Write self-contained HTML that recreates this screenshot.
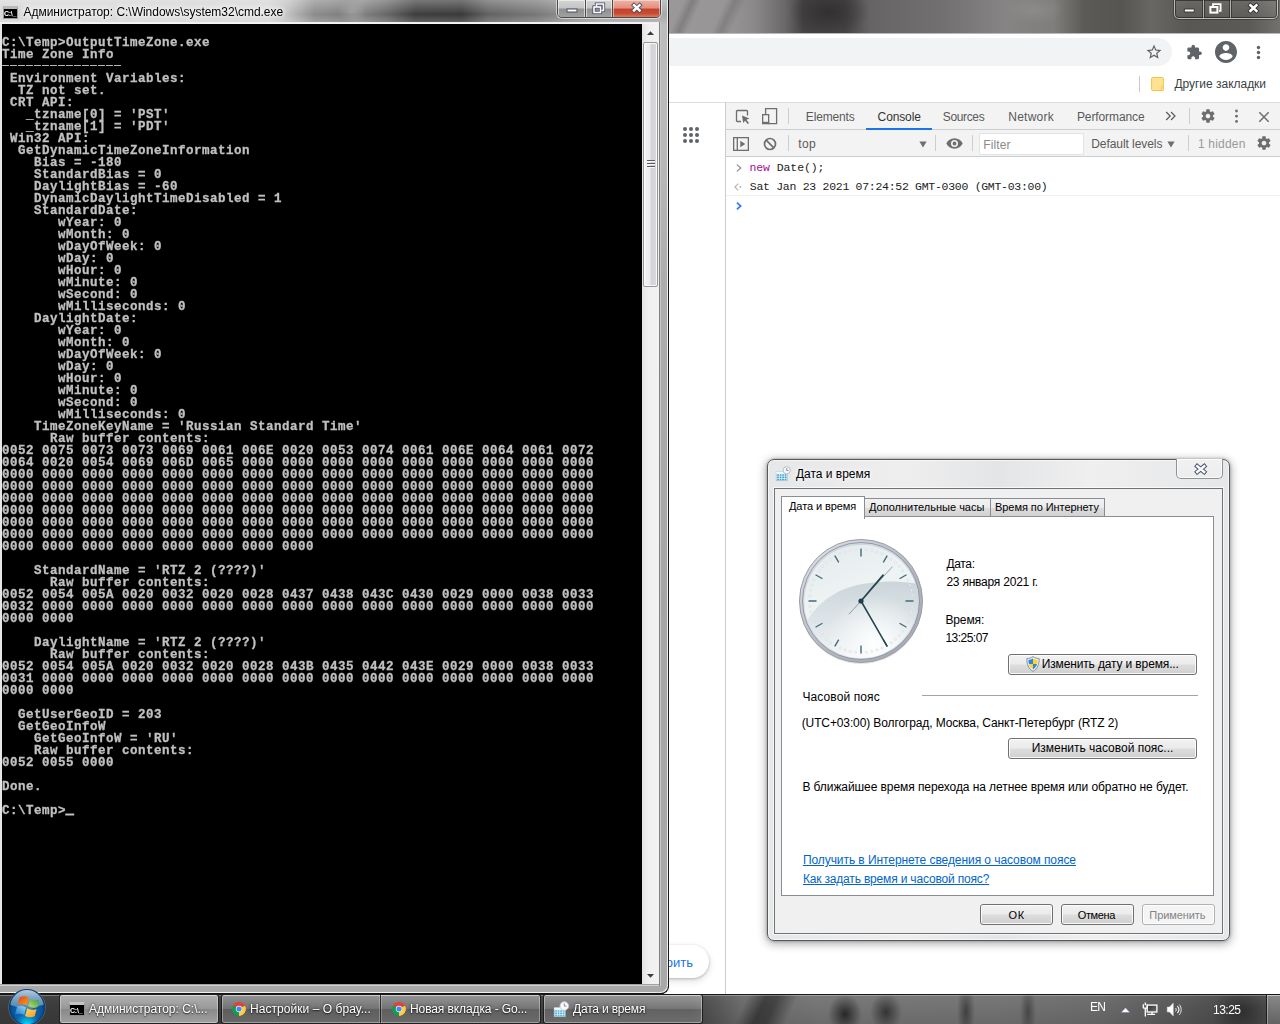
<!DOCTYPE html>
<html lang="ru">
<head>
<meta charset="utf-8">
<title>Desktop</title>
<style>
*{box-sizing:border-box;margin:0;padding:0}
html,body{width:1280px;height:1024px;overflow:hidden;background:#fff}
body{position:relative;font-family:"Liberation Sans",sans-serif;font-size:12px;color:#000}
.abs{position:absolute}
.t{position:absolute;white-space:nowrap;line-height:1}

/* ---------- Chrome window ---------- */
#chrome{position:absolute;left:669px;top:0;width:611px;height:994px;background:#fff;overflow:hidden}
#cglass{position:absolute;left:0;top:0;width:611px;height:33px;
 background:
  radial-gradient(ellipse 40px 26px at 160px 12px,rgba(35,33,33,.6),rgba(35,33,33,0) 100%),
  radial-gradient(ellipse 30px 14px at 365px 10px,rgba(160,158,156,.35),rgba(160,158,156,0) 100%),
  linear-gradient(115deg,rgba(0,0,0,0) 0,rgba(0,0,0,0) 14px,rgba(0,0,0,.16) 22px,rgba(0,0,0,0) 30px,rgba(0,0,0,0) 52px,rgba(0,0,0,.14) 60px,rgba(0,0,0,0) 70px),
  linear-gradient(90deg,#9a9898 0,#979595 10%,#8a8888 14%,#6a6868 19%,#454343 22%,#484646 29%,#666464 33%,#727070 45%,#868484 55%,#807e7c 63%,#5c5a56 68%,#575551 74%,#696763 79%,#595753 85%,#5c5a56 95%,#73716d 100%);}
#omni{position:absolute;left:-40px;top:38px;width:543px;height:28px;border-radius:14px;background:#f1f3f4}

/* ---------- DevTools ---------- */
#dt{position:absolute;left:56px;top:102px;width:555px;height:892px;background:#fff;border-left:1px solid #cbcdd1}
#dttabs{position:absolute;left:0;top:0;width:554px;height:28px;background:#f3f3f3;border-top:1px solid #dadce0;border-bottom:1px solid #cacdd1}
#dtbar{position:absolute;left:0;top:28px;width:554px;height:27px;background:#f3f3f3;border-bottom:1px solid #cacdd1}
.dtt{color:#5a5a5a;font-size:12px}
.mono{font-family:"Liberation Mono",monospace}

/* ---------- cmd window ---------- */
#cmd{position:absolute;left:0;top:0;width:669px;height:994px;border-radius:0 0 7px 0;
 background:linear-gradient(180deg,#bdbdbd 0,#b9b9b9 15%,#adadad 28%,#a6a6a6 60%,#a9a9a9 100%);overflow:hidden}
#cmdtitle{position:absolute;left:0;top:0;width:669px;height:24px;
 background:
  linear-gradient(180deg,rgba(255,255,255,.30) 0,rgba(255,255,255,.10) 40%,rgba(255,255,255,0) 60%,rgba(255,255,255,.22) 100%),
  radial-gradient(ellipse 14px 12px at 352px 12px,rgba(175,175,175,.55),rgba(175,175,175,0) 100%),
  linear-gradient(90deg,#d6d6d6 0,#d4d4d4 40%,#c0c0c0 43%,#8c8c8c 47%,#7c7c7c 52%,#828282 54%,#666 58%,#3e3e3e 62%,#3a3a3a 69%,#626262 73%,#777 80%,#8c8c8c 84%,#a4a4a4 90%,#a8a8a8 100%);}
#cmdclient{position:absolute;left:2px;top:24px;width:640px;height:960px;background:#000;overflow:hidden}
#cmdtext{will-change:transform;-webkit-text-stroke:.3px #c0c0c0;position:absolute;left:-.500px;top:.800px;font-family:"Liberation Mono",monospace;font-weight:bold;font-size:12.500px;letter-spacing:.499px;line-height:12px;color:#c0c0c0;white-space:pre}
#cmdsb{position:absolute;left:642px;top:24px;width:17px;height:960px;background:linear-gradient(90deg,#e4e4e4 0,#f0f0f0 40%,#f2f2f2 100%)}

/* ---------- Dialog ---------- */
#dlg{position:absolute;left:767px;top:459px;width:463px;height:482px;border-radius:7px;
 background:linear-gradient(90deg,#e6e7e8 0,#eeeeef 30%,#e4e5e6 50%,#efeff0 70%,#e6e7e8 100%);
 border:1px solid #55585c;box-shadow:0 0 0 1px rgba(255,255,255,.6) inset,0 2px 10px 1px rgba(0,0,0,.32),0 0 3px rgba(0,0,0,.32)}
#dlgclient{position:absolute;left:6px;top:28px;width:449px;height:446px;background:#f0f0f0;border:1px solid #6e7378;box-shadow:0 0 0 1px rgba(255,255,255,.7)}
#tabpage{position:absolute;left:6px;top:27px;width:433px;height:380px;background:#fff;border:1px solid #898c95}
.lnk{color:#0066cc;text-decoration:underline;text-underline-offset:1px}
.wbtn{position:absolute;height:21px;border:1px solid #707070;border-radius:3px;
 background:linear-gradient(180deg,#f2f2f2 0,#ebebeb 48%,#dddddd 52%,#cfcfcf 100%);box-shadow:inset 0 0 0 1px rgba(255,255,255,.85)}

/* ---------- Taskbar ---------- */
#tb{position:absolute;left:0;top:994px;width:1280px;height:30px;
 background:
  linear-gradient(180deg,rgba(255,255,255,.32) 0,rgba(255,255,255,.32) 1px,rgba(255,255,255,.04) 1px,rgba(255,255,255,0) 40%,rgba(0,0,0,.08) 100%),
  radial-gradient(ellipse 30px 26px at 1242px 16px,rgba(20,20,20,.5),rgba(20,20,20,0) 100%),
  linear-gradient(115deg,rgba(0,0,0,0) 678px,rgba(20,20,20,.55) 695px,rgba(20,20,20,.5) 706px,rgba(0,0,0,0) 724px),
  radial-gradient(ellipse 17px 20px at 845px 19px,rgba(15,15,15,.75),rgba(15,15,15,0) 100%),
  radial-gradient(ellipse 16px 20px at 886px 17px,rgba(20,20,20,.65),rgba(20,20,20,0) 100%),
  radial-gradient(ellipse 9px 30px at 966px 16px,rgba(25,25,25,.55),rgba(25,25,25,0) 100%),
  radial-gradient(ellipse 8px 30px at 1028px 16px,rgba(25,25,25,.45),rgba(25,25,25,0) 100%),
  linear-gradient(90deg,#3b3b3b 0,#404040 30%,#444 54%,#565656 56%,#6a6a6a 58%,#747474 64%,#727272 78%,#6a6a6a 86%,#585858 92%,#4a4a4a 96%,#505050 100%);
 border-top:1px solid #181818}
.tbb{position:absolute;top:-1px;height:30px;border:1px solid rgba(20,20,20,.9);border-radius:3px;
 box-shadow:inset 0 0 0 1px rgba(255,255,255,.35);
 background:linear-gradient(180deg,rgba(255,255,255,.42) 0,rgba(255,255,255,.28) 48%,rgba(255,255,255,.17) 52%,rgba(255,255,255,.24) 100%)}
.tbt{will-change:transform;position:absolute;white-space:nowrap;line-height:1;color:#fff;font-size:12px;text-shadow:0 0 3px rgba(0,0,0,.8),0 1px 1px rgba(0,0,0,.5)}
</style>
<style id="fit">
#cmdttl{letter-spacing:-0.024px;margin-left:0.5px}
#bk1{letter-spacing:-0.021px;margin-left:0.4px}
#dt1{letter-spacing:-0.171px;margin-left:-1.2px}
#dt2{letter-spacing:-0.133px;margin-left:-0.4px}
#dt3{letter-spacing:-0.367px;margin-left:-1.2px}
#dt4{letter-spacing:0.233px;margin-left:-0.7px}
#dt5{letter-spacing:-0.100px;margin-left:-1.1px}
#dt6{letter-spacing:0.300px;margin-left:0.3px}
#dt7{letter-spacing:0.080px;margin-left:-0.7px}
#dt8{letter-spacing:-0.062px;margin-left:-0.8px}
#dt9{letter-spacing:0.200px;margin-left:-1.1px}
#con1{letter-spacing:-0.080px;margin-left:-0.6px}
#con2{letter-spacing:-0.289px;margin-left:-0.2px}
#dttl{letter-spacing:-0.018px;margin-left:0.0px}
#tab1{letter-spacing:-0.091px;margin-left:0.0px}
#tab2{letter-spacing:0.000px;margin-left:0.0px}
#tab3{letter-spacing:-0.059px;margin-left:-1.0px}
#d1{letter-spacing:-0.325px;margin-left:0.4px}
#d2{letter-spacing:-0.225px;margin-left:0.4px}
#d3{letter-spacing:-0.120px;margin-left:-0.6px}
#d4{letter-spacing:-0.514px;margin-left:-0.6px}
#d5{letter-spacing:-0.139px;margin-left:-1.3px}
#d6{letter-spacing:0.109px;margin-left:-0.6px}
#d7{letter-spacing:-0.117px;margin-left:-1.3px}
#d8{letter-spacing:-0.009px;margin-left:-1.3px}
#d9{letter-spacing:-0.079px;margin-left:-0.6px}
#d10{letter-spacing:-0.068px;margin-left:-0.1px}
#d11{letter-spacing:-0.174px;margin-left:-0.1px}
#b1{letter-spacing:0.600px;margin-left:1.6px}
#b2{letter-spacing:-0.360px;margin-left:0.7px}
#b3{letter-spacing:-0.075px;margin-left:-0.7px}
#tb1{letter-spacing:-0.005px;margin-left:0.2px}
#tb2{letter-spacing:0.050px;margin-left:-1.0px}
#tb3{letter-spacing:-0.100px;margin-left:-1.0px}
#tb4{letter-spacing:-0.182px;margin-left:0.0px}
#tr1{letter-spacing:-0.800px;margin-left:-0.4px}
#tr2{letter-spacing:-0.500px;margin-left:-0.5px}
</style>
</head>
<body>

<!-- ================= CHROME ================= -->
<div id="chrome">
  <div id="cglass"></div>
  <div class="abs" style="left:0;top:33px;width:611px;height:1px;background:#b9b8b8"></div>
  <!-- caption buttons (inactive aero) -->
  <div class="abs" id="ccap" style="left:505px;top:-1px;width:104px;height:20px;border:1px solid rgba(255,255,255,.55);border-radius:0 0 5px 5px;box-shadow:inset 0 0 0 1px rgba(20,20,20,.55),0 0 0 1px rgba(20,20,20,.35);background:linear-gradient(180deg,rgba(255,255,255,.10),rgba(255,255,255,.02))">
    <div class="abs" style="left:28px;top:0;width:1px;height:18px;background:rgba(255,255,255,.5);box-shadow:1px 0 0 rgba(20,20,20,.5),-1px 0 0 rgba(20,20,20,.5)"></div>
    <div class="abs" style="left:55px;top:0;width:1px;height:18px;background:rgba(255,255,255,.5);box-shadow:1px 0 0 rgba(20,20,20,.5),-1px 0 0 rgba(20,20,20,.5)"></div>
    <svg class="abs" style="left:0;top:0" width="104" height="19" viewBox="0 0 104 19">
      <rect x="9.300" y="9" width="10" height="3" fill="#fff" stroke="#3a3a3a" stroke-width="1"/>
      <g fill="none" stroke="#fff" stroke-width="1.800"><path d="M38 6V4.200h7.600v6.600H44"/><rect x="35.400" y="7" width="7" height="5.600" stroke-width="2"/></g>
      <path d="M75.400 5.300l6 5.600M81.400 5.300l-6 5.600" stroke="#2c2c2c" stroke-width="4.200" stroke-linecap="square"/>
      <path d="M75.400 5.300l6 5.600M81.400 5.300l-6 5.600" stroke="#fff" stroke-width="2.600" stroke-linecap="square"/>
    </svg>
  </div>
  <!-- toolbar -->
  <div id="omni"></div>
  <svg class="abs" style="left:476px;top:43px" width="18" height="18" viewBox="0 0 24 24"><path fill="#5f6368" d="M22 9.240l-7.190-.620L12 2 9.190 8.630 2 9.240l5.460 4.730L5.820 21 12 17.270 18.180 21l-1.630-7.030L22 9.240zM12 15.400l-3.760 2.270 1-4.280-3.320-2.880 4.380-.38L12 6.100l1.710 4.040 4.380.38-3.320 2.880 1 4.280L12 15.400z"/></svg>
  <svg class="abs" style="left:516.500px;top:43.500px" width="16.500" height="16.500" viewBox="0 0 24 24"><path fill="#5f6368" d="M20.500 11H19V7c0-1.100-.9-2-2-2h-4V3.500C13 2.120 11.880 1 10.500 1S8 2.120 8 3.500V5H4c-1.100 0-1.990.9-1.990 2v3.800H3.500c1.490 0 2.700 1.210 2.700 2.700s-1.210 2.700-2.700 2.700H2V20c0 1.100.9 2 2 2h3.800v-1.500c0-1.490 1.210-2.700 2.700-2.700 1.490 0 2.700 1.210 2.700 2.700V22H17c1.100 0 2-.9 2-2v-4h1.500c1.380 0 2.500-1.120 2.500-2.500S21.880 11 20.500 11z"/></svg>
  <svg class="abs" style="left:546px;top:41px" width="22" height="22" viewBox="2 2 20 20"><path fill="#5f6368" d="M12 2C6.480 2 2 6.480 2 12s4.480 10 10 10 10-4.480 10-10S17.520 2 12 2zm0 3c1.660 0 3 1.340 3 3s-1.340 3-3 3-3-1.340-3-3 1.340-3 3-3zm0 14.200c-2.500 0-4.710-1.280-6-3.220.03-1.990 4-3.080 6-3.080 1.990 0 5.970 1.090 6 3.080-1.290 1.940-3.500 3.220-6 3.220z"/></svg>
  <svg class="abs" style="left:586px;top:44px" width="7" height="17" viewBox="0 0 7 17"><g fill="#5f6368"><circle cx="3.5" cy="3.500" r="1.700"/><circle cx="3.5" cy="8.500" r="1.700"/><circle cx="3.500" cy="13.500" r="1.700"/></g></svg>
  <!-- bookmarks bar -->
  <div class="abs" style="left:470px;top:76px;width:1px;height:16px;background:#c8cacd"></div>
  <svg class="abs" style="left:482px;top:76px" width="14" height="16" viewBox="0 0 14 16"><path d="M1.600 1.500h9.800a1 1 0 0 1 1 1v11a1 1 0 0 1-1 1H1.600a1 1 0 0 1-1-1v-11a1 1 0 0 1 1-1z" fill="#fde293" stroke="#f9c440" stroke-width="1"/><rect x="10.400" y="10.200" width="2" height="4.200" rx=".8" fill="#fde293" stroke="#f9c440" stroke-width=".8"/></svg>
  <div class="t" id="bk1" style="left:505px;top:78px;font-size:12px;color:#3c4043">Другие закладки</div>
  <div class="abs" style="left:0;top:102px;width:611px;height:1px;background:#dadce0"></div>
  <!-- new tab page remnants -->
  <svg class="abs" style="left:14px;top:127px" width="16" height="16" viewBox="0 0 16 16"><g fill="#5f6368"><circle cx="2" cy="2" r="2"/><circle cx="8" cy="2" r="2"/><circle cx="14" cy="2" r="2"/><circle cx="2" cy="8" r="2"/><circle cx="8" cy="8" r="2"/><circle cx="14" cy="8" r="2"/><circle cx="2" cy="14" r="2"/><circle cx="8" cy="14" r="2"/><circle cx="14" cy="14" r="2"/></g></svg>
  <div class="abs" style="left:-70px;top:945px;width:110px;height:33px;border-radius:17px;background:#fff;box-shadow:0 1px 3px rgba(0,0,0,.22),0 3px 7px 1px rgba(0,0,0,.10)"></div>
  <div class="t" id="custom" style="left:-42px;top:956px;width:66px;text-align:right;font-size:13px;color:#1a73e8">Настроить</div>
  <div id="dt">
    <div id="dttabs"></div>
    <div id="dtbar"></div>
    <!-- tab strip icons -->
    <svg class="abs" style="left:9px;top:7px" width="16" height="16" viewBox="0 0 16 16"><path d="M12.500 6.500V2.300a.8.800 0 0 0-.8-.8H2.300a.8.800 0 0 0-.8.800v9.400a.8.800 0 0 0 .8.800H6" fill="none" stroke="#6e6e6e" stroke-width="1.300"/><path d="M7 6.500l7.500 3.100-3.100 1.100 2.600 3.200-1.400 1.100-2.500-3.300-1.900 2.400z" fill="#6e6e6e"/></svg>
    <svg class="abs" style="left:35px;top:5px" width="17" height="18" viewBox="0 0 17 18"><path d="M4.600 7.500V1.600h11v15H7.500" fill="none" stroke="#6e6e6e" stroke-width="1.300"/><rect x="1.650" y="7.650" width="6" height="9" fill="#f3f3f3" stroke="#6e6e6e" stroke-width="1.300"/><rect x="1" y="14.800" width="7.300" height="1.800" fill="#6e6e6e"/></svg>
    <div class="abs" style="left:62px;top:6px;width:1px;height:16px;background:#cdcdcd"></div>
    <div class="t dtt" id="dt1" style="left:81px;top:9px">Elements</div>
    <div class="t dtt" id="dt2" style="left:152px;top:9px;color:#333">Console</div>
    <div class="abs" style="left:140px;top:26px;width:66px;height:2px;background:#1a73e8"></div>
    <div class="t dtt" id="dt3" style="left:218px;top:9px">Sources</div>
    <div class="t dtt" id="dt4" style="left:283px;top:9px">Network</div>
    <div class="t dtt" id="dt5" style="left:352px;top:9px">Performance</div>
    <svg class="abs" style="left:439px;top:9px" width="11" height="10" viewBox="0 0 11 10"><path d="M1.200 1l4 4-4 4M6 1l4 4-4 4" fill="none" stroke="#5a5a5a" stroke-width="1.200"/></svg>
    <div class="abs" style="left:463px;top:6px;width:1px;height:16px;background:#cdcdcd"></div>
    <svg class="abs gear" style="left:474px;top:6px" width="16" height="16" viewBox="0 0 24 24"><path fill="#6e6e6e" d="M19.430 12.980c.040-.320.070-.640.070-.980s-.030-.660-.070-.980l2.110-1.650c.190-.150.240-.420.120-.640l-2-3.460c-.120-.220-.390-.300-.610-.220l-2.490 1c-.520-.400-1.080-.730-1.690-.980l-.380-2.650C14.460 2.180 14.250 2 14 2h-4c-.250 0-.460.180-.490.420l-.380 2.650c-.610.250-1.170.590-1.690.980l-2.490-1c-.230-.090-.490 0-.610.220l-2 3.460c-.130.220-.070.490.120.640l2.110 1.650c-.040.320-.070.650-.070.980s.030.660.070.980l-2.110 1.650c-.190.150-.240.420-.120.640l2 3.460c.120.220.390.300.610.220l2.490-1c.520.400 1.080.730 1.690.980l.380 2.650c.030.240.240.420.490.420h4c.250 0 .460-.180.490-.420l.380-2.650c.610-.250 1.170-.590 1.690-.980l2.490 1c.230.090.490 0 .610-.220l2-3.460c.120-.220.070-.490-.120-.640l-2.110-1.650zM12 15.500c-1.930 0-3.500-1.570-3.500-3.500s1.570-3.500 3.500-3.500 3.500 1.570 3.500 3.500-1.570 3.500-3.500 3.500z"/></svg>
    <svg class="abs" style="left:508px;top:7px" width="5" height="15" viewBox="0 0 5 15"><g fill="#6e6e6e"><circle cx="2.500" cy="2" r="1.400"/><circle cx="2.500" cy="7.200" r="1.400"/><circle cx="2.500" cy="12.400" r="1.400"/></g></svg>
    <svg class="abs" style="left:532px;top:9px" width="12" height="12" viewBox="0 0 12 12"><path d="M1.300 1.300l9.400 9.400M10.700 1.300l-9.400 9.400" stroke="#6e6e6e" stroke-width="1.500"/></svg>
    <!-- console toolbar -->
    <svg class="abs" style="left:7px;top:35px" width="16" height="14" viewBox="0 0 16 14"><rect x=".650" y=".650" width="14.700" height="12.700" fill="none" stroke="#6e6e6e" stroke-width="1.300"/><path d="M4.300 1v12" stroke="#6e6e6e" stroke-width="1.300"/><path d="M7.300 3.800l5 3.200-5 3.200z" fill="#6e6e6e"/></svg>
    <svg class="abs" style="left:37px;top:35px" width="14" height="14" viewBox="0 0 14 14"><circle cx="7" cy="7" r="5.500" fill="none" stroke="#6e6e6e" stroke-width="1.700"/><path d="M3.200 3.200l7.600 7.600" stroke="#6e6e6e" stroke-width="1.700"/></svg>
    <div class="abs" style="left:62px;top:33px;width:1px;height:16px;background:#cdcdcd"></div>
    <div class="t dtt" id="dt6" style="left:72px;top:36px">top</div>
    <svg class="abs" style="left:193px;top:39px" width="8" height="7" viewBox="0 0 8 7"><path d="M.4.500h7.200L4 6.500z" fill="#6e6e6e"/></svg>
    <div class="abs" style="left:209px;top:33px;width:1px;height:16px;background:#cdcdcd"></div>
    <svg class="abs" style="left:220px;top:36px" width="17" height="11" viewBox="0 0 17 11"><path d="M8.500.300C4.800.300 1.700 2.400.300 5.500c1.400 3.100 4.500 5.200 8.200 5.200s6.800-2.100 8.200-5.200C15.300 2.400 12.200.300 8.500.300zm0 8.700a3.500 3.500 0 1 1 0-7 3.500 3.500 0 0 1 0 7zm0-5.400a1.900 1.900 0 1 0 0 3.800 1.900 1.900 0 0 0 0-3.800z" fill="#6e6e6e"/></svg>
    <div class="abs" style="left:246px;top:33px;width:1px;height:16px;background:#cdcdcd"></div>
    <div class="abs" style="left:253px;top:31px;width:105px;height:22px;background:#fff;border:1px solid #e3e3e3"></div>
    <div class="t" id="dt7" style="left:258px;top:37px;font-size:12px;color:#8a8a8a">Filter</div>
    <div class="t dtt" id="dt8" style="left:366px;top:36px">Default levels</div>
    <svg class="abs" style="left:441px;top:39px" width="8" height="7" viewBox="0 0 8 7"><path d="M.4.500h7.200L4 6.500z" fill="#6e6e6e"/></svg>
    <div class="abs" style="left:462px;top:33px;width:1px;height:16px;background:#cdcdcd"></div>
    <div class="t" id="dt9" style="left:473px;top:36px;font-size:12px;color:#9a9a9a">1 hidden</div>
    <svg class="abs gear" style="left:530px;top:33px" width="16" height="16" viewBox="0 0 24 24"><path fill="#6e6e6e" d="M19.430 12.980c.040-.320.070-.640.070-.980s-.030-.660-.070-.980l2.110-1.650c.190-.150.240-.420.120-.640l-2-3.460c-.120-.220-.390-.300-.610-.220l-2.490 1c-.520-.400-1.080-.730-1.690-.980l-.380-2.650C14.460 2.180 14.250 2 14 2h-4c-.250 0-.460.180-.490.420l-.380 2.650c-.610.250-1.170.590-1.690.980l-2.490-1c-.230-.090-.490 0-.610.220l-2 3.460c-.130.220-.070.490.120.640l2.110 1.650c-.040.320-.070.650-.070.980s.030.660.070.980l-2.110 1.650c-.190.150-.240.420-.120.640l2 3.460c.120.220.390.300.610.220l2.490-1c.520.400 1.080.730 1.690.980l.380 2.650c.030.240.240.420.490.420h4c.250 0 .460-.180.490-.420l.380-2.650c.610-.250 1.170-.590 1.690-.980l2.490 1c.230.090.490 0 .610-.220l2-3.460c.120-.220.070-.490-.120-.640l-2.110-1.650zM12 15.500c-1.930 0-3.500-1.570-3.500-3.500s1.570-3.500 3.500-3.500 3.500 1.570 3.500 3.500-1.570 3.500-3.500 3.500z"/></svg>
    <!-- console rows -->
    <svg class="abs" style="left:9.500px;top:61.500px" width="6" height="8" viewBox="0 0 6 8"><path d="M.8.600l4 3.400-4 3.400" fill="none" stroke="#8b8b8b" stroke-width="1.200"/></svg>
    <div class="t mono" id="con1" style="left:24px;top:60px;font-size:11.500px;color:#222"><span style="color:#aa0d91">new</span> Date();</div>
    <svg class="abs" style="left:8px;top:80.500px" width="9" height="8" viewBox="0 0 9 8"><path d="M4.300.600L.9 4l3.400 3.400" fill="none" stroke="#b5b5b5" stroke-width="1.200"/><circle cx="6.300" cy="4" r="1" fill="#b5b5b5"/></svg>
    <div class="t mono" id="con2" style="left:24px;top:79.200px;font-size:11.500px;color:#222">Sat Jan 23 2021 07:24:52 GMT-0300 (GMT-03:00)</div>
    <div class="abs" style="left:0;top:93px;width:554px;height:1px;background:#f0f0f0"></div>
    <svg class="abs" style="left:9.500px;top:100px" width="6" height="8" viewBox="0 0 6 8"><path d="M.9.700l3.800 3.300-3.800 3.300" fill="none" stroke="#367cf1" stroke-width="1.700"/></svg>
  </div>
</div>

<!-- ================= CMD ================= -->
<div id="cmd">
  <div id="cmdtitle"></div>
  <!-- frame lines -->
  <div class="abs" style="left:0;top:22px;width:661px;height:2px;background:linear-gradient(180deg,#ececec,#f8f8f8)"></div>
  <div class="abs" style="left:0;top:24px;width:2px;height:962px;background:#e6e6e6"></div>
  <div class="abs" style="left:0;top:984px;width:661px;height:2px;background:linear-gradient(180deg,#8c8c8c,#e6e6e6)"></div>
  <div class="abs" style="left:659px;top:22px;width:2px;height:964px;background:linear-gradient(90deg,#5f5f5f,#e9e9e9)"></div>
  <div class="abs" style="left:0;top:992px;width:662px;height:1px;background:#f1f1f1"></div>
  <div class="abs" style="left:0;top:993px;width:664px;height:1px;background:#161616"></div>
  <div class="abs" style="left:667px;top:0;width:1px;height:986px;background:#ededed"></div>
  <div class="abs" style="left:668px;top:0;width:1px;height:988px;background:#1a1a1a"></div>
  <div class="abs" style="left:655px;top:980px;width:14px;height:14px;border-radius:0 0 8px 0;border:solid #161616;border-width:0 1px 1px 0;box-shadow:inset -1px -1px 0 #e8e8e8"></div>
  <!-- title icon + text -->
  <div class="abs" style="left:3px;top:6px;width:15px;height:13px;background:#000;border:1px solid #9a9a9a;border-top:3px solid #b9b9b9"></div>
  <div class="t" id="cmdico" style="will-change:transform;left:4px;top:10px;font-size:7px;font-weight:bold;color:#fff;letter-spacing:-.3px">C:\_</div>
  <div class="t" id="cmdttl" style="left:23px;top:6px;font-size:12px;color:#000;text-shadow:0 0 5px #fff,0 0 5px #fff,0 0 8px #fff">Администратор: C:\Windows\system32\cmd.exe</div>
  <!-- caption buttons -->
  <div class="abs" style="left:557px;top:-1px;width:104px;height:19px;border:1px solid #4a4a4a;border-radius:0 0 5px 5px;overflow:hidden;box-shadow:0 0 0 1px rgba(255,255,255,.55)">
    <div class="abs" style="left:0;top:0;width:27px;height:18px;background:linear-gradient(180deg,#d4d4d4 0,#c4c4c4 45%,#8f8f8f 50%,#a4a4a4 100%);box-shadow:inset 0 0 0 1px rgba(255,255,255,.55)"></div>
    <div class="abs" style="left:27px;top:0;width:1px;height:18px;background:#4a4a4a"></div>
    <div class="abs" style="left:28px;top:0;width:26px;height:18px;background:linear-gradient(180deg,#d4d4d4 0,#c4c4c4 45%,#8f8f8f 50%,#a4a4a4 100%);box-shadow:inset 0 0 0 1px rgba(255,255,255,.55)"></div>
    <div class="abs" style="left:54px;top:0;width:1px;height:18px;background:#4a4a4a"></div>
    <div class="abs" style="left:55px;top:0;width:47px;height:18px;background:linear-gradient(180deg,#eeb3a5 0,#e08f7f 45%,#c8402a 50%,#c94b32 75%,#dd8a6c 100%);box-shadow:inset 0 0 0 1px rgba(255,255,255,.45)"></div>
    <svg class="abs" style="left:0;top:0" width="102" height="18" viewBox="0 0 102 18">
      <rect x="9" y="9" width="10" height="3" fill="#fff" stroke="#474c66" stroke-width="1"/>
      <g fill="none" stroke="#474c66" stroke-width="3.200"><path d="M38.500 6.500V4h7v6.500H43.500"/><rect x="36" y="7" width="6.500" height="5.500"/></g>
      <g fill="none" stroke="#fff" stroke-width="1.600"><path d="M38.500 6.500V4h7v6.500H43.500"/><rect x="36" y="7" width="6.500" height="5.500"/></g>
      <path d="M76 5.200l5.600 5.200M81.600 5.200l-5.600 5.200" stroke="#474c66" stroke-width="4.200" stroke-linecap="square"/>
      <path d="M76 5.200l5.600 5.200M81.600 5.200l-5.600 5.200" stroke="#fff" stroke-width="2.500" stroke-linecap="square"/>
    </svg>
  </div>
  <div id="cmdclient"><div id="cmdtext">
C:\Temp&gt;OutputTimeZone.exe
Time Zone Info
<span style="display:inline-block;letter-spacing:-2.930px;transform-origin:0 55%;transform:translate(-3px,-1.800px) scale(1.750,.62)">---------------</span>
 Environment Variables:
  TZ not set.
 CRT API:
   _tzname[0] = 'PST'
   _tzname[1] = 'PDT'
 Win32 API:
  GetDynamicTimeZoneInformation
    Bias = -180
    StandardBias = 0
    DaylightBias = -60
    DynamicDaylightTimeDisabled = 1
    StandardDate:
       wYear: 0
       wMonth: 0
       wDayOfWeek: 0
       wDay: 0
       wHour: 0
       wMinute: 0
       wSecond: 0
       wMilliseconds: 0
    DaylightDate:
       wYear: 0
       wMonth: 0
       wDayOfWeek: 0
       wDay: 0
       wHour: 0
       wMinute: 0
       wSecond: 0
       wMilliseconds: 0
    TimeZoneKeyName = 'Russian Standard Time'
      Raw buffer contents:
0052 0075 0073 0073 0069 0061 006E 0020 0053 0074 0061 006E 0064 0061 0072
0064 0020 0054 0069 006D 0065 0000 0000 0000 0000 0000 0000 0000 0000 0000
0000 0000 0000 0000 0000 0000 0000 0000 0000 0000 0000 0000 0000 0000 0000
0000 0000 0000 0000 0000 0000 0000 0000 0000 0000 0000 0000 0000 0000 0000
0000 0000 0000 0000 0000 0000 0000 0000 0000 0000 0000 0000 0000 0000 0000
0000 0000 0000 0000 0000 0000 0000 0000 0000 0000 0000 0000 0000 0000 0000
0000 0000 0000 0000 0000 0000 0000 0000 0000 0000 0000 0000 0000 0000 0000
0000 0000 0000 0000 0000 0000 0000 0000 0000 0000 0000 0000 0000 0000 0000
0000 0000 0000 0000 0000 0000 0000 0000

    StandardName = 'RTZ 2 (????)'
      Raw buffer contents:
0052 0054 005A 0020 0032 0020 0028 0437 0438 043C 0430 0029 0000 0038 0033
0032 0000 0000 0000 0000 0000 0000 0000 0000 0000 0000 0000 0000 0000 0000
0000 0000

    DaylightName = 'RTZ 2 (????)'
      Raw buffer contents:
0052 0054 005A 0020 0032 0020 0028 043B 0435 0442 043E 0029 0000 0038 0033
0031 0000 0000 0000 0000 0000 0000 0000 0000 0000 0000 0000 0000 0000 0000
0000 0000

  GetUserGeoID = 203
  GetGeoInfoW
    GetGeoInfoW = 'RU'
    Raw buffer contents:
0052 0055 0000

Done.

C:\Temp&gt;<span style="position:relative;top:-1px;-webkit-text-stroke:1.300px #c0c0c0">_</span></div></div>
  <div id="cmdsb">
    <svg class="abs" style="left:5px;top:7px" width="7" height="4" viewBox="0 0 7 4"><path d="M0 4L3.500 .3 7 4z" fill="#3c3c3c"/></svg>
    <div class="abs" style="left:1px;top:18px;width:15px;height:245px;border:1px solid #979797;border-radius:2px;background:linear-gradient(90deg,#f4f4f4 0,#ececec 45%,#d3d3d7 55%,#d9d9dd 100%);box-shadow:inset 0 0 0 1px rgba(255,255,255,.8)"></div>
    <div class="abs" style="left:5px;top:136px;width:8px;height:1px;background:#5a5a5a;box-shadow:0 1px 0 #f6f6f6,0 3px 0 #5a5a5a,0 4px 0 #f6f6f6,0 6px 0 #5a5a5a,0 7px 0 #f6f6f6"></div>
    <svg class="abs" style="left:5px;top:950px" width="7" height="4" viewBox="0 0 7 4"><path d="M0 0L3.500 3.700 7 0z" fill="#3c3c3c"/></svg>
  </div>
</div>

<!-- ================= DIALOG ================= -->
<div id="dlg">
  <!-- title -->
  <svg class="abs" style="left:7px;top:5px" width="17" height="17" viewBox="0 0 17 17"><rect x="1.200" y="6.700" width="11" height="9" fill="#e4f1f8" stroke="#a9bfcb" stroke-width=".7"/><rect x="1.200" y="6.700" width="11" height="2" fill="#f4f8fa"/><g fill="#3ba7d0"><rect x="2.2" y="9.3" width="1.700" height="1.500"/><rect x="4.7" y="9.3" width="1.700" height="1.500"/><rect x="7.2" y="9.3" width="1.700" height="1.500"/><rect x="9.7" y="9.3" width="1.700" height="1.500"/><rect x="2.2" y="11.5" width="1.700" height="1.500"/><rect x="4.7" y="11.5" width="1.700" height="1.500"/><rect x="7.2" y="11.5" width="1.700" height="1.500"/><rect x="9.7" y="11.5" width="1.700" height="1.500"/><rect x="2.2" y="13.7" width="1.700" height="1.500"/><rect x="4.7" y="13.7" width="1.700" height="1.500"/><rect x="7.2" y="13.7" width="1.700" height="1.500"/><rect x="9.7" y="13.7" width="1.700" height="1.500"/></g><circle cx="11.700" cy="5.300" r="3.600" fill="#f6f8fa" stroke="#aab1ba" stroke-width=".8"/><path d="M11.700 3.200v2.300h1.800" fill="none" stroke="#6f7680" stroke-width=".8"/></svg>
  <div class="t" id="dttl" style="left:28px;top:7.5px;font-size:12px;text-shadow:0 0 6px #fff,0 0 6px #fff">Дата и время</div>
  <div class="abs" style="left:408px;top:-1px;width:47px;height:20px;border:1px solid #8e9299;border-top:none;border-radius:0 0 5px 5px;background:linear-gradient(180deg,#f1f1f2 0,#ededee 100%);box-shadow:inset 0 0 0 1px rgba(255,255,255,.7)"></div>
  <svg class="abs" style="left:426px;top:3px" width="14" height="12" viewBox="0 0 14 12"><path d="M3.200 3.200l7 5.800M10.200 3.200l-7 5.800" stroke="#4b5170" stroke-width="4.400" stroke-linecap="square"/><path d="M3.200 3.200l7 5.800M10.200 3.200l-7 5.800" stroke="#fbfbfc" stroke-width="2.500" stroke-linecap="square"/></svg>
  <div id="dlgclient">
    <!-- tabs -->
    <div class="abs" style="left:89px;top:9px;width:127px;height:19px;border:1px solid #898c95;border-bottom:none;border-left:none;background:linear-gradient(180deg,#f2f2f2 0,#ebebeb 48%,#dddddd 52%,#cfcfcf 100%)"></div>
    <div class="abs" style="left:216px;top:9px;width:114px;height:19px;border:1px solid #898c95;border-bottom:none;border-left:none;background:linear-gradient(180deg,#f2f2f2 0,#ebebeb 48%,#dddddd 52%,#cfcfcf 100%)"></div>
    <div class="t tab" id="tab2" style="left:94px;top:13px;font-size:11px">Дополнительные часы</div>
    <div class="t tab" id="tab3" style="left:221px;top:13px;font-size:11px">Время по Интернету</div>
    <div id="tabpage">
      <svg class="abs" id="clock" style="left:14px;top:18.500px" width="130" height="130" viewBox="0 0 130 130">
  <defs>
    <linearGradient id="rim" x1="0" y1="0" x2="1" y2="1"><stop offset="0" stop-color="#e4e6ea"/><stop offset=".5" stop-color="#b9bcc3"/><stop offset="1" stop-color="#a2a5ad"/></linearGradient>
    <linearGradient id="face" x1="0" y1="0" x2="0" y2="1"><stop offset="0" stop-color="#cdd7db"/><stop offset=".35" stop-color="#ccd6da"/><stop offset=".7" stop-color="#dfe6e9"/><stop offset="1" stop-color="#f1f4f5"/></linearGradient>
    <linearGradient id="shine" x1="0" y1="0" x2=".6" y2="1"><stop offset="0" stop-color="#e4eaed"/><stop offset=".6" stop-color="#edf2f3"/><stop offset="1" stop-color="#f3f6f7"/></linearGradient>
    <radialGradient id="low" cx=".62" cy=".86" r=".42"><stop offset="0" stop-color="#ffffff" stop-opacity=".95"/><stop offset="1" stop-color="#ffffff" stop-opacity="0"/></radialGradient>
  </defs>
  <circle cx="65" cy="66.500" r="61.500" fill="#000" opacity=".10"/>
  <circle cx="65" cy="65" r="61.500" fill="url(#rim)" stroke="#9a9da5" stroke-width="1"/>
  <circle cx="65" cy="65" r="58.500" fill="#d4d9dd" stroke="#7f8aa0" stroke-width=".8"/>
  <circle cx="65" cy="65" r="57" fill="url(#face)"/>
  <circle cx="65" cy="65" r="57" fill="url(#low)"/>
  <path d="M11.300 84.500C24 64 44 51 70 47.500S108 46 119.200 47.500A57 57 0 0 0 11.300 84.500z" fill="url(#shine)"/>
  <g fill="#fff" stroke="#bfcacf" stroke-width=".45"><circle cx="70.38" cy="13.78" r="1"/><circle cx="75.71" cy="14.63" r="1"/><circle cx="80.91" cy="16.02" r="1"/><circle cx="85.95" cy="17.95" r="1"/><circle cx="95.27" cy="23.34" r="1"/><circle cx="99.46" cy="26.73" r="1"/><circle cx="103.27" cy="30.54" r="1"/><circle cx="106.66" cy="34.73" r="1"/><circle cx="112.05" cy="44.05" r="1"/><circle cx="113.98" cy="49.09" r="1"/><circle cx="115.37" cy="54.29" r="1"/><circle cx="116.22" cy="59.62" r="1"/><circle cx="116.22" cy="70.38" r="1"/><circle cx="115.37" cy="75.71" r="1"/><circle cx="113.98" cy="80.91" r="1"/><circle cx="112.05" cy="85.95" r="1"/><circle cx="106.66" cy="95.27" r="1"/><circle cx="103.27" cy="99.46" r="1"/><circle cx="99.46" cy="103.27" r="1"/><circle cx="95.27" cy="106.66" r="1"/><circle cx="85.95" cy="112.05" r="1"/><circle cx="80.91" cy="113.98" r="1"/><circle cx="75.71" cy="115.37" r="1"/><circle cx="70.38" cy="116.22" r="1"/><circle cx="59.62" cy="116.22" r="1"/><circle cx="54.29" cy="115.37" r="1"/><circle cx="49.09" cy="113.98" r="1"/><circle cx="44.05" cy="112.05" r="1"/><circle cx="34.73" cy="106.66" r="1"/><circle cx="30.54" cy="103.27" r="1"/><circle cx="26.73" cy="99.46" r="1"/><circle cx="23.34" cy="95.27" r="1"/><circle cx="17.95" cy="85.95" r="1"/><circle cx="16.02" cy="80.91" r="1"/><circle cx="14.63" cy="75.71" r="1"/><circle cx="13.78" cy="70.38" r="1"/><circle cx="13.78" cy="59.62" r="1"/><circle cx="14.63" cy="54.29" r="1"/><circle cx="16.02" cy="49.09" r="1"/><circle cx="17.95" cy="44.05" r="1"/><circle cx="23.34" cy="34.73" r="1"/><circle cx="26.73" cy="30.54" r="1"/><circle cx="30.54" cy="26.73" r="1"/><circle cx="34.73" cy="23.34" r="1"/><circle cx="44.05" cy="17.95" r="1"/><circle cx="49.09" cy="16.02" r="1"/><circle cx="54.29" cy="14.63" r="1"/><circle cx="59.62" cy="13.78" r="1"/></g>
  <path d="M65.00 20.50L65.00 12.50M87.25 26.46L91.25 19.53M103.54 42.75L110.47 38.75M109.50 65.00L117.50 65.00M103.54 87.25L110.47 91.25M87.25 103.54L91.25 110.47M65.00 109.50L65.00 117.50M42.75 103.54L38.75 110.47M26.46 87.25L19.53 91.25M20.50 65.00L12.50 65.00M26.46 42.75L19.53 38.75M42.75 26.46L38.75 19.53" stroke="#456c7b" stroke-width="1.400" fill="none"/>
  <path d="M52.84 78.27L96.41 30.72" stroke="#6b7f88" stroke-width=".7"/>
  <path d="M65.00 65.00L87.08 39.15" stroke="#23444f" stroke-width="1.700" stroke-linecap="round"/>
  <path d="M65.00 65.00L91.00 110.03" stroke="#23444f" stroke-width="1.500" stroke-linecap="round"/>
  <circle cx="65" cy="65" r="2.600" fill="#1f3f4b"/>
</svg>
      <div class="t" id="d1" style="left:164px;top:41px">Дата:</div>
      <div class="t" id="d2" style="left:164px;top:59px">23 января 2021 г.</div>
      <div class="t" id="d3" style="left:164px;top:97px">Время:</div>
      <div class="t" id="d4" style="left:164px;top:115px">13:25:07</div>
      <div class="wbtn" style="left:226px;top:137px;width:189px"></div>
      <svg class="abs" style="left:244px;top:139px" width="14" height="16" viewBox="0 0 14 16"><path d="M7 .6C5 2 3 2.500.8 2.600.7 8 2.300 12.700 7 15.400 11.700 12.700 13.300 8 13.200 2.600 11 2.500 9 2 7 .6z" fill="#e9eef5" stroke="#7d8795" stroke-width=".9"/><path d="M7 2.400C5.500 3.300 4 3.800 2.400 4c0 1.500.2 2.800.6 4H7z" fill="#2f86e0"/><path d="M7 2.400c1.500.9 3 1.400 4.600 1.600 0 1.500-.2 2.800-.6 4H7z" fill="#ffd426"/><path d="M3 8c.7 2.300 2 4.100 4 5.500V8z" fill="#ffd426"/><path d="M11 8c-.7 2.300-2 4.100-4 5.500V8z" fill="#2f86e0"/></svg>
      <div class="t" id="d5" style="left:261px;top:141px">Изменить дату и время...</div>
      <div class="t" id="d6" style="left:21px;top:174px">Часовой пояс</div>
      <div class="abs" style="left:140px;top:178px;width:276px;height:1px;background:#a5a5a5"></div>
      <div class="t" id="d7" style="left:21px;top:200px">(UTC+03:00) Волгоград, Москва, Санкт-Петербург (RTZ 2)</div>
      <div class="wbtn" style="left:226px;top:221px;width:189px"></div>
      <div class="t" id="d8" style="left:251px;top:225px">Изменить часовой пояс...</div>
      <div class="t" id="d9" style="left:21px;top:264px">В ближайшее время перехода на летнее время или обратно не будет.</div>
      <div class="t lnk" id="d10" style="left:21px;top:337px">Получить в Интернете сведения о часовом поясе</div>
      <div class="t lnk" id="d11" style="left:21px;top:356px">Как задать время и часовой пояс?</div>
    </div>
    <div class="abs" style="left:6px;top:7px;width:84px;height:23px;background:#fff;border:1px solid #898c95;border-bottom:none"></div>
    <div class="t tab" id="tab1" style="left:14px;top:12px;font-size:11px">Дата и время</div>
    <!-- buttons -->
    <div class="wbtn" style="left:205px;top:415px;width:73px"></div>
    <div class="t" id="b1" style="left:232px;top:420.7px;font-size:11px">ОК</div>
    <div class="wbtn" style="left:286px;top:415px;width:73px"></div>
    <div class="t" id="b2" style="left:302px;top:420.7px;font-size:11px">Отмена</div>
    <div class="wbtn" style="left:367px;top:415px;width:73px;border-color:#adb2b5;background:#f4f4f4"></div>
    <div class="t" id="b3" style="left:375px;top:420.7px;font-size:11px;color:#838383">Применить</div>
  </div>
</div>

<!-- ================= TASKBAR ================= -->
<div id="tb">
  <!-- start orb -->
  <svg class="abs" style="left:7px;top:-7px" width="40" height="37" viewBox="0 0 40 37">
    <defs>
      <radialGradient id="orb" cx=".5" cy=".55" r=".55"><stop offset="0" stop-color="#0d6bb3"/><stop offset=".7" stop-color="#0a5a9e"/><stop offset="1" stop-color="#073f78"/></radialGradient>
      <radialGradient id="orbglow2" cx=".5" cy=".5" r=".5"><stop offset="0" stop-color="#00e8ff"/><stop offset=".45" stop-color="#08a8e0" stop-opacity=".8"/><stop offset="1" stop-color="#0a6ab0" stop-opacity="0"/></radialGradient>
      <linearGradient id="orbhi" x1="0" y1="0" x2="0" y2="1"><stop offset="0" stop-color="#c4d6e6"/><stop offset=".35" stop-color="#8fb0cb"/><stop offset="1" stop-color="#4f81ab"/></linearGradient>
      <linearGradient id="fr" x1="0" y1="0" x2="1" y2="1"><stop offset="0" stop-color="#e2401b"/><stop offset="1" stop-color="#f9a41c"/></linearGradient>
      <linearGradient id="fg" x1="0" y1="1" x2="1" y2="0"><stop offset="0" stop-color="#c2e07a"/><stop offset="1" stop-color="#3c9e33"/></linearGradient>
      <linearGradient id="fb" x1="0" y1="1" x2="1" y2="0"><stop offset="0" stop-color="#1777c6"/><stop offset="1" stop-color="#9bd6f7"/></linearGradient>
      <linearGradient id="fy" x1="0" y1="0" x2="1" y2="1"><stop offset="0" stop-color="#ffe066"/><stop offset="1" stop-color="#f8931d"/></linearGradient>
    </defs>
    <circle cx="20" cy="19.300" r="18.600" fill="#b9b2aa" opacity=".55"/>
    <circle cx="20" cy="19.300" r="17.500" fill="url(#orb)" stroke="#0b3f72" stroke-width="1.400"/>
    <clipPath id="orbclip"><circle cx="20" cy="19.300" r="17"/></clipPath><ellipse cx="20" cy="37" rx="15" ry="15" fill="url(#orbglow2)" clip-path="url(#orbclip)"/>
    <path d="M3.400 17A16.700 16.700 0 0 1 36.600 17C 30 17.500 25 22 20 22S 9 18 3.400 17z" fill="url(#orbhi)" opacity=".92"/>
    <path d="M12.500 9.600Q17 7 21.800 9.500L20 17.600Q15.500 15.200 10.800 16.600z" fill="url(#fr)"/>
    <path d="M23 11Q27.500 13.600 32.100 11.500L30.500 19Q26 21 21.100 18z" fill="url(#fg)"/>
    <path d="M10.100 18.500Q14.500 16.600 19 19.400L17.400 27Q13 24.600 8 26.500z" fill="url(#fb)"/>
    <path d="M20.200 20.400Q25 22.600 29.600 21.300L27.700 28.300Q23 30.600 18 27.900z" fill="url(#fy)"/>
  </svg>
  <!-- task buttons -->
  <div class="tbb" style="left:59px;width:160px;background:linear-gradient(180deg,rgba(255,255,255,.58) 0,rgba(255,255,255,.48) 48%,rgba(255,255,255,.40) 52%,rgba(255,255,255,.52) 100%)"></div>
  <div class="abs" style="left:69px;top:7px;width:16px;height:14px;background:#000;border:1px solid #8a8a8a;border-top:3px solid #c4c4c4"></div>
  <div class="t" id="tbico" style="will-change:transform;left:70px;top:12px;font-size:7px;font-weight:bold;color:#fff;letter-spacing:-.2px">C:\_</div>
  <div class="tbt" id="tb1" style="left:89px;top:8px">Администратор: C:\...</div>
  <div class="tbb" style="left:221px;width:320px"></div>
  <div class="abs" style="left:380px;top:0;width:1px;height:28px;background:rgba(20,20,20,.8);box-shadow:1px 0 0 rgba(255,255,255,.25),-1px 0 0 rgba(255,255,255,.25)"></div>
  <svg class="abs" style="left:231.300px;top:6.200px" width="16" height="16" viewBox="0 0 48 48"><path d="M24 24L6.700 14A20 20 0 0 1 41.300 14z" fill="#db4437"/><path d="M24 24l17.300-10A20 20 0 0 1 24 44z" fill="#ffcd40"/><path d="M24 24v20A20 20 0 0 1 6.700 14z" fill="#0f9d58"/><path d="M24 14h17.300A20 20 0 0 0 6.700 14z" fill="#db4437"/><path d="M41.300 14A20 20 0 0 1 24 44l8.700-15z" fill="#ffcd40"/><path d="M6.700 14l8.700 15L24 44A20 20 0 0 1 6.700 14z" fill="#0f9d58"/><circle cx="24" cy="24" r="9.500" fill="#f1f1f1"/><circle cx="24" cy="24" r="7.600" fill="#4285f4"/></svg>
  <div class="tbt" id="tb2" style="left:251px;top:8px">Настройки – О брау...</div>
  <svg class="abs" style="left:391.300px;top:6.200px" width="16" height="16" viewBox="0 0 48 48"><path d="M24 24L6.700 14A20 20 0 0 1 41.300 14z" fill="#db4437"/><path d="M24 24l17.300-10A20 20 0 0 1 24 44z" fill="#ffcd40"/><path d="M24 24v20A20 20 0 0 1 6.700 14z" fill="#0f9d58"/><path d="M24 14h17.300A20 20 0 0 0 6.700 14z" fill="#db4437"/><path d="M41.300 14A20 20 0 0 1 24 44l8.700-15z" fill="#ffcd40"/><path d="M6.700 14l8.700 15L24 44A20 20 0 0 1 6.700 14z" fill="#0f9d58"/><circle cx="24" cy="24" r="9.500" fill="#f1f1f1"/><circle cx="24" cy="24" r="7.600" fill="#4285f4"/></svg>
  <div class="tbt" id="tb3" style="left:411px;top:8px">Новая вкладка - Go...</div>
  <div class="tbb" style="left:543px;width:160px"></div>
  <svg class="abs" style="left:553px;top:5.500px" width="17" height="17" viewBox="0 0 17 17"><rect x="1.200" y="6.700" width="11" height="9" fill="#e4f1f8" stroke="#a9bfcb" stroke-width=".7"/><rect x="1.200" y="6.700" width="11" height="2" fill="#f4f8fa"/><g fill="#49b3dc"><rect x="2.2" y="9.3" width="1.700" height="1.500"/><rect x="4.7" y="9.3" width="1.700" height="1.500"/><rect x="7.2" y="9.3" width="1.700" height="1.500"/><rect x="9.7" y="9.3" width="1.700" height="1.500"/><rect x="2.2" y="11.5" width="1.700" height="1.500"/><rect x="4.7" y="11.5" width="1.700" height="1.500"/><rect x="7.2" y="11.5" width="1.700" height="1.500"/><rect x="9.7" y="11.5" width="1.700" height="1.500"/><rect x="2.2" y="13.7" width="1.700" height="1.500"/><rect x="4.7" y="13.7" width="1.700" height="1.500"/><rect x="7.2" y="13.7" width="1.700" height="1.500"/><rect x="9.7" y="13.7" width="1.700" height="1.500"/></g><circle cx="11.300" cy="5" r="4.300" fill="#f6f8fa" stroke="#c3c9d0" stroke-width=".9"/><path d="M11.300 2.400v2.700h2.100" fill="none" stroke="#6f7680" stroke-width=".8"/></svg>
  <div class="tbt" id="tb4" style="left:573px;top:8px">Дата и время</div>
  <!-- tray -->
  <div class="tbt" id="tr1" style="left:1090px;top:6px;text-shadow:none">EN</div>
  <svg class="abs" style="left:1121px;top:12px" width="9" height="6" viewBox="0 0 9 6"><path d="M0 5.500L4.500 .8 9 5.500z" fill="#fff" stroke="#6a6a8a" stroke-width=".5"/></svg>
  <svg class="abs" style="left:1142px;top:7px" width="17" height="16" viewBox="0 0 17 16"><defs><linearGradient id="mon" x1="0" y1="0" x2="1" y2="1"><stop offset="0" stop-color="#303030"/><stop offset="1" stop-color="#6e6e6e"/></linearGradient></defs><rect x="5.200" y="3.100" width="9.700" height="6.900" fill="url(#mon)" stroke="#fff" stroke-width="1.300"/><path d="M10 10v1.800M5.200 12.400h7.800" stroke="#fff" stroke-width="1.300" fill="none"/><path d="M1.300 2.200v3.200a.8.800 0 0 0 .8.800h2.400a.8.800 0 0 0 .8-.800V2.200M3.300.600v2.600M3.300 6.200v8.400" fill="none" stroke="#fff" stroke-width="1.300"/></svg>
  <svg class="abs" style="left:1166px;top:6px" width="17" height="17" viewBox="0 0 17 17"><path d="M1.200 6h2.300L7.300 2v13L3.500 11H1.200z" fill="#fff" stroke="#cfcfcf" stroke-width=".5"/><path d="M9.600 7c.8 1 .8 2.400 0 3.400" fill="none" stroke="#fff" stroke-width="1"/><path d="M11.400 5.200c1.800 2 1.800 5 0 7" fill="none" stroke="#fff" stroke-width="1.100"/><path d="M13.300 3.600c2.500 2.800 2.500 7.400 0 10.200" fill="none" stroke="#e8e8e8" stroke-width="1"/></svg>
  <div class="tbt" id="tr2" style="left:1213px;top:9px;text-shadow:none">13:25</div>
  <div class="abs" style="left:1266px;top:0;width:14px;height:29px;border-left:1px solid #1c1c1c;background:linear-gradient(180deg,rgba(255,255,255,.30),rgba(255,255,255,.14));box-shadow:inset 1px 0 0 rgba(255,255,255,.35),inset 0 1px 0 rgba(255,255,255,.3)"></div>
</div>

</body>
</html>
